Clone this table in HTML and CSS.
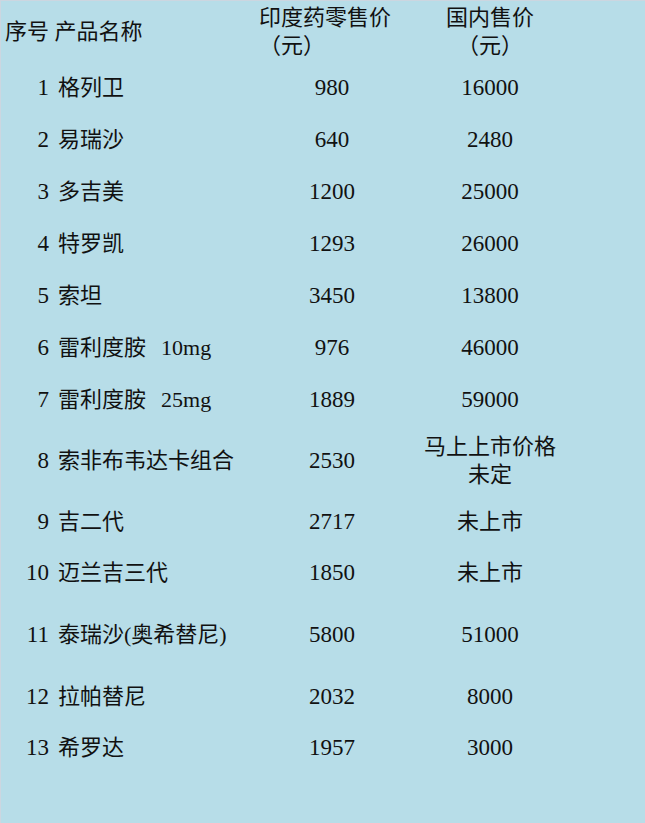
FILE: index.html
```html
<!DOCTYPE html>
<html lang="zh">
<head>
<meta charset="utf-8">
<title>药品价格</title>
<link rel="stylesheet" href="styles.css">
</head>
<body>
<div class="page">
  <div class="table">
    <div class="row head">
      <div class="h-name">序号 产品名称</div>
      <div class="h-india">印度药零售价<br>（元）</div>
      <div class="h-cn">国内售价<br>（元）</div>
    </div>
    <div class="row"><div class="no">1</div><div class="name">格列卫</div><div class="p1">980</div><div class="p2">16000</div></div>
    <div class="row"><div class="no">2</div><div class="name">易瑞沙</div><div class="p1">640</div><div class="p2">2480</div></div>
    <div class="row"><div class="no">3</div><div class="name">多吉美</div><div class="p1">1200</div><div class="p2">25000</div></div>
    <div class="row"><div class="no">4</div><div class="name">特罗凯</div><div class="p1">1293</div><div class="p2">26000</div></div>
    <div class="row"><div class="no">5</div><div class="name">索坦</div><div class="p1">3450</div><div class="p2">13800</div></div>
    <div class="row"><div class="no">6</div><div class="name">雷利度胺<span class="dose">10mg</span></div><div class="p1">976</div><div class="p2">46000</div></div>
    <div class="row"><div class="no">7</div><div class="name">雷利度胺<span class="dose">25mg</span></div><div class="p1">1889</div><div class="p2">59000</div></div>
    <div class="row tall"><div class="no">8</div><div class="name">索非布韦达卡组合</div><div class="p1">2530</div><div class="p2 txt">马上上市价格<br>未定</div></div>
    <div class="row r9"><div class="no">9</div><div class="name">吉二代</div><div class="p1">2717</div><div class="p2 txt">未上市</div></div>
    <div class="row"><div class="no">10</div><div class="name">迈兰吉三代</div><div class="p1">1850</div><div class="p2 txt">未上市</div></div>
    <div class="row r11"><div class="no">11</div><div class="name">泰瑞沙(奥希替尼)</div><div class="p1">5800</div><div class="p2">51000</div></div>
    <div class="row r12"><div class="no">12</div><div class="name">拉帕替尼</div><div class="p1">2032</div><div class="p2">8000</div></div>
    <div class="row"><div class="no">13</div><div class="name">希罗达</div><div class="p1">1957</div><div class="p2">3000</div></div>
  </div>
</div>
</body>
</html>
```

FILE: styles.css
```css
html, body {
  margin: 0;
  padding: 0;
}
body {
  background: #b7dde8;
  font-family: "Liberation Serif", "Noto Sans CJK SC", serif;
  font-size: 22px;
  color: #111;
}
.page {
  width: 645px;
  height: 823px;
  box-sizing: border-box;
  border-top: 1px solid #ccd6e0;
  border-left: 1px solid #ccd6e0;
  background: #b7dde8;
}
.table {
  display: flex;
  flex-direction: column;
}
.row {
  display: grid;
  grid-template-columns: 48px 210px 146px 170px;
  align-items: center;
  height: 52px;
  line-height: 28px;
}
.row.head {
  height: 61px;
}
.row.tall {
  height: 70px;
}
.row.r9 {
  height: 51px;
}
.row.r11 {
  height: 72px;
}
.row.r12 {
  height: 51px;
}
.h-name {
  grid-column: 1 / 3;
  padding-left: 4px;
}
.h-india {
  text-align: left;
}
.h-cn {
  text-align: center;
}
.no {
  text-align: right;
  font-size: 23px;
}
.name {
  padding-left: 9px;
  white-space: nowrap;
}
.dose {
  margin-left: 15px;
}
.p1, .p2 {
  text-align: center;
  font-size: 23px;
}
.p2.txt {
  font-size: 22px;
}
```
